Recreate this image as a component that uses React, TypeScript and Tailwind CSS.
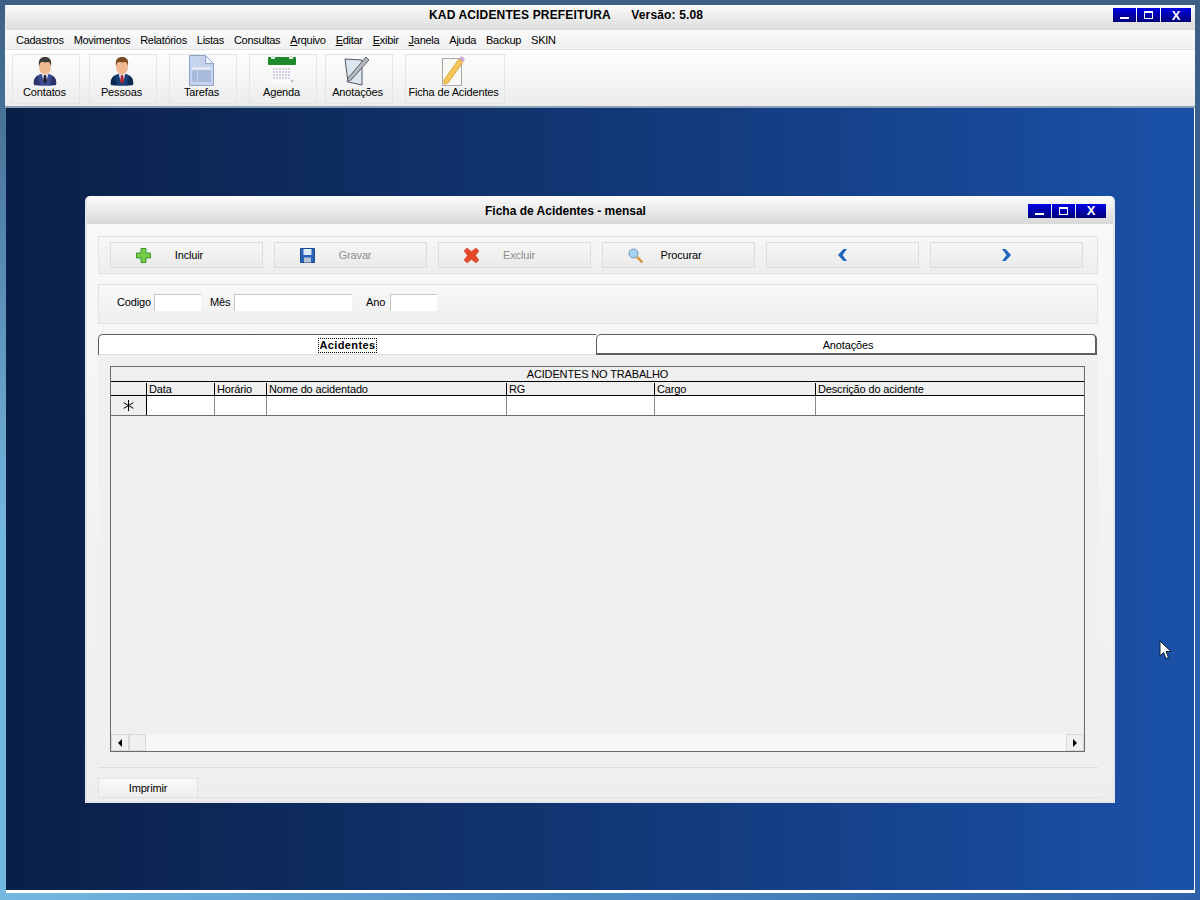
import { ReactNode } from 'react';

const MENU = [
  { label: 'Cadastros' },
  { label: 'Movimentos' },
  { label: 'Relatórios' },
  { label: 'Listas' },
  { label: 'Consultas' },
  { label: 'Arquivo', key: true },
  { label: 'Editar', key: true },
  { label: 'Exibir', key: true },
  { label: 'Janela', key: true },
  { label: 'Ajuda' },
  { label: 'Backup' },
  { label: 'SKIN' },
];

const COLUMNS = [
  { label: 'Data', width: 'w-[68px]' },
  { label: 'Horário', width: 'w-[52px]' },
  { label: 'Nome do acidentado', width: 'w-[240px]' },
  { label: 'RG', width: 'w-[148px]' },
  { label: 'Cargo', width: 'w-[161px]' },
  { label: 'Descrição do acidente', width: 'flex-1' },
];

function Person({ suit, dark, tie, hair }: { suit: string; dark: string; tie: string; hair: string }) {
  return (
    <svg width="24" height="31" viewBox="0 0 24 31">
      <path d="M1 30c-1-7 3-10 7-11h8c4 1 8 4 7 11-3 1-19 1-22 0z" fill={suit} />
      <path d="M1 30c-1-5 1-8 4-9l2 9zM23 30c1-5-1-8-4-9l-2 9z" fill={dark} />
      <path d="M8.500 18h7l-2 8h-3z" fill="#e8e8f0" />
      <path d="M11 20h2l1 6-2 3-2-3z" fill={tie} />
      <ellipse cx="12" cy="11.500" rx="6" ry="8" fill="#f0b890" />
      <path d="M6 11C5 4 8 2 12 2s7 2 6 9c-1-2-1-4-3-4-3 1-5 0-6 0-2 0-2 2-3 4z" fill={hair} />
    </svg>
  );
}

function DocIcon() {
  return (
    <svg width="25" height="31" viewBox="0 0 25 31">
      <path d="M.5.500h16l8 8v22H.5z" fill="#c5d3ec" stroke="#8ea3c8" />
      <path d="M16.500.500l8 8h-8z" fill="#eef2fa" stroke="#8ea3c8" />
      <rect x="3" y="12" width="19" height="15" fill="#a9bbdd" />
      <rect x="3" y="12" width="19" height="3" fill="#e2e8f5" />
      <rect x="8" y="15" width="1" height="12" fill="#c8d4ea" />
    </svg>
  );
}

function CalendarIcon() {
  return (
    <svg width="28" height="28" viewBox="0 0 28 28" className="mb-[2px]">
      <rect x="3" y="6" width="22" height="22" fill="#fafafa" />
      <rect x="0" y="1" width="28" height="8" rx="1" fill="#1f8a2c" />
      <rect x="3" y="0" width="4" height="3" fill="#d8e8d8" />
      <rect x="21" y="0" width="4" height="3" fill="#d8e8d8" />
      {[12, 15, 18, 21].map(y =>
        [5, 8, 11, 14, 17, 20].map(x => <rect key={`${x}-${y}`} x={x} y={y} width="2" height="2" fill="#d6d0e4" />),
      )}
      <circle cx="24" cy="25" r="1.500" fill="#c0c0c0" />
    </svg>
  );
}

function NoteIcon() {
  return (
    <svg width="27" height="31" viewBox="0 0 27 31">
      <path d="M1 4l17 1v25L4 27z" fill="#dbe6ee" stroke="#556" />
      <path d="M4 23L22 2l3 3L7 25l-4 2z" fill="#b4b8bc" stroke="#60656c" />
    </svg>
  );
}

function PencilIcon() {
  return (
    <svg width="25" height="31" viewBox="0 0 25 31">
      <rect x="1.500" y="3.500" width="19" height="27" fill="#f8f8f4" stroke="#a8a8a8" />
      <path d="M3 25L18 4l4 3L7 28l-4 1z" fill="#f6c657" stroke="#dda63a" />
      <path d="M18 4l2-3 4 3-2 3z" fill="#c9a6d8" />
    </svg>
  );
}

function PlusIcon() {
  return (
    <svg width="15" height="15" viewBox="0 0 15 15">
      <path d="M5 .5h5v4.500h4.500v5H10v4.500H5V10H.5V5H5z" fill="#74cc48" stroke="#3f9a2a" />
    </svg>
  );
}

function SaveIcon() {
  return (
    <svg width="15" height="15" viewBox="0 0 15 15">
      <path d="M.5.500h14v14H.5z" fill="#2a64b8" stroke="#1c4a90" />
      <rect x="3.500" y="1" width="8" height="6" fill="#dfe8f5" />
      <rect x="4" y="9.500" width="7" height="5" fill="#b8c4d4" />
    </svg>
  );
}

function CrossIcon() {
  return (
    <svg width="15" height="15" viewBox="0 0 15 15">
      <path d="M0 3l3-3 4.500 3.500L12 0l3 3-3.500 4.500L15 12l-3 3-4.500-3.500L3 15l-3-3 3.500-4.500z" fill="#e8482c" stroke="#c03a20" strokeWidth=".5" />
    </svg>
  );
}

function SearchIcon() {
  return (
    <svg width="15" height="15" viewBox="0 0 15 15">
      <path d="M9 9l5.500 5.500" stroke="#d09a3c" strokeWidth="2.500" />
      <circle cx="5.500" cy="5.500" r="4.500" fill="#a8d4f4" stroke="#6e94b4" />
    </svg>
  );
}

function Chevron({ right }: { right?: boolean }) {
  return (
    <svg width="11" height="14" viewBox="0 0 11 14">
      <path d={right ? 'M1 1h3.500L10 7l-5.500 6H1l4.500-6z' : 'M10 1H6.500L1 7l5.500 6H10L5.500 7z'} fill="#1f68bd" />
    </svg>
  );
}

function WinButtons() {
  const btn = 'h-[14px] flex items-center justify-center bg-gradient-to-b from-[#0000e6] to-[#000078]';
  return (
    <div className="flex gap-px">
      <div className={`${btn} w-[23px]`}>
        <div className="w-[9px] h-[2px] mt-[6px] bg-white" />
      </div>
      <div className={`${btn} w-[23px]`}>
        <div className="w-[9px] h-[8px] border border-t-2 border-white" />
      </div>
      <div className={`${btn} w-[30px] text-white text-[13px] leading-none font-bold`}>X</div>
    </div>
  );
}

function ToolButton({ icon, label, className }: { icon: ReactNode; label: string; className: string }) {
  return (
    <div className={`h-[50px] flex flex-col items-center pr-[3px] border border-[#e4e4e4] ${className}`}>
      <div className="h-[31px] flex items-end justify-center">{icon}</div>
      <span className="-mt-[2px] leading-[16px] whitespace-nowrap">{label}</span>
    </div>
  );
}

function ActionButton({ icon, label, disabled }: { icon: ReactNode; label?: string; disabled?: boolean }) {
  return (
    <div className="w-[153px] h-[26px] flex items-center border border-[#dcdcdc] bg-gradient-to-b from-[#f6f6f6] to-[#eaeaea]">
      {label ? (
        <>
          <div className="w-[65px] flex justify-center">{icon}</div>
          <span className={`w-[50px] text-center ${disabled ? '-ml-[10px] text-[#8e8e8e]' : '-ml-[12px]'}`}>{label}</span>
        </>
      ) : (
        <div className="w-full flex justify-center">{icon}</div>
      )}
    </div>
  );
}

function Field({ width }: { width: string }) {
  return <div className={`${width} h-[17px] bg-white border-l border-t border-[#c8c8c8]`} />;
}

function ScrollButton({ dir }: { dir: 'left' | 'right' }) {
  return (
    <div className="w-[18px] h-full flex items-center justify-center bg-[#f0f0f0] border border-[#d8d8d8]">
      <div
        className={
          dir === 'left'
            ? 'w-0 h-0 border-y-[4px] border-y-transparent border-r-[4px] border-r-black'
            : 'w-0 h-0 border-y-[4px] border-y-transparent border-l-[4px] border-l-black'
        }
      />
    </div>
  );
}

function ChildWindow() {
  return (
    <div className="absolute left-[79px] top-[88px] w-[1030px] h-[607px] flex flex-col rounded-t-[5px] bg-[#f2f2f2] border-x-2 border-b-2 border-[#e2e6ea]">
      <div className="h-[28px] flex items-center pt-px bg-gradient-to-b from-[#fcfcfc] to-[#d8d8d8] rounded-t-[5px] pr-[7px]">
        <div className="flex-1 pl-[398px] text-[12px] tracking-normal font-bold">Ficha de Acidentes - mensal</div>
        <WinButtons />
      </div>

      <div className="flex-1 flex flex-col px-[11px] pt-[12px] bg-gradient-to-b from-[#f8f8f8] to-[#eeeeee]">
        <div className="w-[1000px] h-[38px] flex items-center gap-[11px] pl-[11px] border border-[#e2e2e2] bg-gradient-to-b from-[#f7f7f7] to-[#eeeeee]">
          <ActionButton icon={<PlusIcon />} label="Incluir" />
          <ActionButton icon={<SaveIcon />} label="Gravar" disabled />
          <ActionButton icon={<CrossIcon />} label="Excluir" disabled />
          <ActionButton icon={<SearchIcon />} label="Procurar" />
          <ActionButton icon={<Chevron />} />
          <ActionButton icon={<Chevron right />} />
        </div>

        <div className="w-[1000px] h-[40px] mt-[10px] flex items-center pl-[18px] pb-[3px] border border-[#e2e2e2] bg-gradient-to-b from-[#f9f9f9] to-[#eeeeee]">
          <span className="w-[33px] mb-[2px]">Codigo</span>
          <div className="ml-[4px]"><Field width="w-[47px]" /></div>
          <span className="ml-[9px] w-[20px] mb-[2px]">Mês</span>
          <div className="ml-[4px]"><Field width="w-[118px]" /></div>
          <span className="ml-[14px] w-[20px] mb-[2px]">Ano</span>
          <div className="ml-[4px]"><Field width="w-[47px]" /></div>
        </div>

        <div className="w-[999px] h-[21px] mt-[10px] flex">
          <div className="w-[498px] h-full flex items-center justify-center bg-white border-t border-l border-[#5e5e5e] rounded-tl-[5px] shadow-[inset_0_-1px_0_#dcdcdc]">
            <span className="font-bold tracking-[0.4px] leading-[13px] outline-1 outline-dotted outline-black">Acidentes</span>
          </div>
          <div className="flex-1 h-full flex items-center justify-center pl-[4px] pt-px bg-white border border-[#5e5e5e] border-b-2 border-r-2 rounded-t-[5px]">
            Anotações
          </div>
        </div>

        <div className="w-[1000px] flex-1 flex flex-col bg-[#f0f0f0] border-b border-[#dddddd] px-[12px] pt-[11px] pb-[15px]">
          <div className="flex-1 flex flex-col w-[975px] bg-[#efefef] border border-[#6a6a6a]">
            <div className="h-[15px] pt-px flex items-center justify-center border-b border-black leading-none">
              ACIDENTES NO TRABALHO
            </div>
            <div className="h-[14px] pt-px flex border-b border-black leading-none">
              <div className="w-[36px] border-r border-black" />
              {COLUMNS.map(c => (
                <div key={c.label} className={`${c.width} pl-[2px] flex items-center border-r border-black last:border-r-0`}>
                  {c.label}
                </div>
              ))}
            </div>
            <div className="h-[20px] flex bg-white border-b border-[#6a6a6a]">
              <div className="w-[36px] flex items-center justify-center bg-[#efefef] border-r border-black">
                <svg width="11" height="11" viewBox="0 0 11 11" stroke="#000" strokeWidth="1">
                  <path d="M5.500 0v11M0.700 2.700l9.600 5.600M10.300 2.700l-9.600 5.600" />
                </svg>
              </div>
              {COLUMNS.map(c => (
                <div key={c.label} className={`${c.width} border-r border-[#8a8a8a] last:border-r-0`} />
              ))}
            </div>
            <div className="flex-1" />
            <div className="h-[17px] flex bg-[#f7f7f7]">
              <ScrollButton dir="left" />
              <div className="w-[17px] h-full bg-[#f0f0f0] border border-[#d8d8d8]" />
              <div className="flex-1" />
              <ScrollButton dir="right" />
            </div>
          </div>
        </div>

        <div className="w-[100px] h-[19px] mt-[10px] flex items-center justify-center bg-gradient-to-b from-[#fafafa] to-[#eeeeee] border-x border-t border-[#e4e4e4]">
          Imprimir
        </div>
        <div className="h-[4px] border-t border-[#e2e2e2]" />
      </div>
    </div>
  );
}

export default function App() {
  return (
    <div className="w-[1200px] h-[900px] overflow-hidden flex flex-col pt-[5px] px-[5px] pb-[7px] bg-[linear-gradient(to_bottom,#3d5f85,transparent_60%),linear-gradient(to_right,#74b8e0,#2c62aa)] text-[11px] leading-[14px] tracking-[-0.15px] text-black font-['Liberation_Sans',Arial,sans-serif] select-none">
      <div className="h-[25px] flex items-start pt-[3px] bg-gradient-to-b from-[#fbfbfb] to-[#dcdcdc] pr-[4px] border-l border-[#e8eef4]">
        <div className="flex-1 pl-[423px] text-[12px] font-bold tracking-[0.15px] whitespace-pre">KAD ACIDENTES PREFEITURA      Versão: 5.08</div>
        <WinButtons />
      </div>

      <div className="h-[20px] flex items-center gap-[10px] pl-[11px] tracking-[-0.28px] bg-gradient-to-b from-[#fafafa] to-[#f0f0f0] border-b border-[#e0e0e0]">
        {MENU.map(m => (
          <span key={m.label}>
            {m.key ? (
              <>
                <span className="underline">{m.label[0]}</span>
                {m.label.slice(1)}
              </>
            ) : (
              m.label
            )}
          </span>
        ))}
      </div>

      <div className="h-[58px] flex items-start pt-[4px] pl-[7px] bg-gradient-to-b from-[#fefefe] to-[#ececec] border-b-2 border-[#8ea0b4]">
        <ToolButton className="w-[68px]" icon={<Person suit="#3c4c90" dark="#2a3468" tie="#223" hair="#3a3a3a" />} label="Contatos" />
        <ToolButton className="w-[68px] ml-[9px]" icon={<Person suit="#173f78" dark="#0e2a52" tie="#b02a3a" hair="#7a4a22" />} label="Pessoas" />
        <ToolButton className="w-[68px] ml-[12px]" icon={<DocIcon />} label="Tarefas" />
        <ToolButton className="w-[68px] ml-[12px]" icon={<CalendarIcon />} label="Agenda" />
        <ToolButton className="w-[68px] ml-[8px]" icon={<NoteIcon />} label="Anotações" />
        <ToolButton className="w-[100px] ml-[12px]" icon={<PencilIcon />} label="Ficha de Acidentes" />
      </div>

      <div className="flex-1 relative ml-px bg-gradient-to-r from-[#0a1f47] to-[#1a51a8] border-b-[3px] border-r-[1px] border-white">
        <ChildWindow />
        <svg className="absolute left-[1153px] top-[532px]" width="13" height="20" viewBox="0 0 13 20">
          <path d="M1 1v15l3.500-3.500 2.500 6 2.500-1-2.500-6H12z" fill="#fff" stroke="#0a2030" />
        </svg>
      </div>
    </div>
  );
}
